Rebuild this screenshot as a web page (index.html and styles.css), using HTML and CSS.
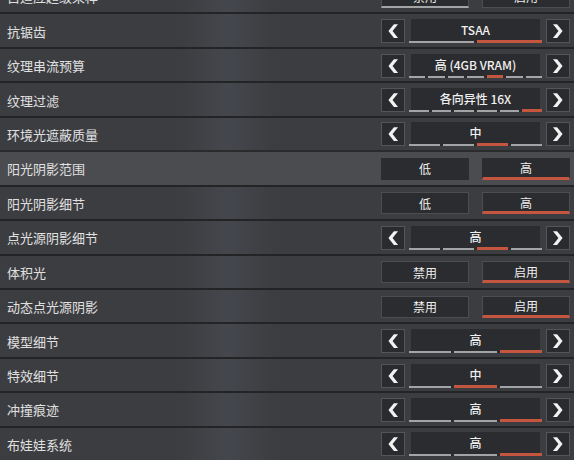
FILE: index.html
```html
<!DOCTYPE html>
<html lang="zh-CN">
<head>
    <meta charset="UTF-8">
    <title>视频设置</title>
    <link rel="stylesheet" href="styles.css">
</head>
<body>
    <div class="list">
        <div class="row">
            <span class="label">自适应超级采样</span>
            <div class="ctl toggle">
                <div class="opt gray">禁用</div>
                <div class="opt">启用</div>
            </div>
        </div>
        <div class="row">
            <span class="label">抗锯齿</span>
            <div class="ctl stepper">
                <div class="arrow"><svg width="24" height="22" viewBox="0 0 24 22"><polygon points="13,3.5 7,11 13,18.5 17.5,18.5 11.5,11 17.5,3.5" fill="#f2f2f2"/></svg></div>
                <div class="val"><div class="txt">TSAA</div><div class="bar"><i class="seg"></i><i class="seg on"></i></div></div>
                <div class="arrow"><svg width="24" height="22" viewBox="0 0 24 22"><polygon points="11,3.5 17,11 11,18.5 6.5,18.5 12.5,11 6.5,3.5" fill="#f2f2f2"/></svg></div>
            </div>
        </div>
        <div class="row">
            <span class="label">纹理串流预算</span>
            <div class="ctl stepper">
                <div class="arrow"><svg width="24" height="22" viewBox="0 0 24 22"><polygon points="13,3.5 7,11 13,18.5 17.5,18.5 11.5,11 17.5,3.5" fill="#f2f2f2"/></svg></div>
                <div class="val"><div class="txt">高 (4GB VRAM)</div><div class="bar"><i class="seg"></i><i class="seg"></i><i class="seg"></i><i class="seg"></i><i class="seg on"></i><i class="seg"></i><i class="seg"></i></div></div>
                <div class="arrow"><svg width="24" height="22" viewBox="0 0 24 22"><polygon points="11,3.5 17,11 11,18.5 6.5,18.5 12.5,11 6.5,3.5" fill="#f2f2f2"/></svg></div>
            </div>
        </div>
        <div class="row">
            <span class="label">纹理过滤</span>
            <div class="ctl stepper">
                <div class="arrow"><svg width="24" height="22" viewBox="0 0 24 22"><polygon points="13,3.5 7,11 13,18.5 17.5,18.5 11.5,11 17.5,3.5" fill="#f2f2f2"/></svg></div>
                <div class="val"><div class="txt">各向异性 16X</div><div class="bar"><i class="seg"></i><i class="seg"></i><i class="seg"></i><i class="seg"></i><i class="seg"></i><i class="seg on"></i></div></div>
                <div class="arrow"><svg width="24" height="22" viewBox="0 0 24 22"><polygon points="11,3.5 17,11 11,18.5 6.5,18.5 12.5,11 6.5,3.5" fill="#f2f2f2"/></svg></div>
            </div>
        </div>
        <div class="row">
            <span class="label">环境光遮蔽质量</span>
            <div class="ctl stepper">
                <div class="arrow"><svg width="24" height="22" viewBox="0 0 24 22"><polygon points="13,3.5 7,11 13,18.5 17.5,18.5 11.5,11 17.5,3.5" fill="#f2f2f2"/></svg></div>
                <div class="val"><div class="txt">中</div><div class="bar"><i class="seg"></i><i class="seg"></i><i class="seg on"></i><i class="seg"></i></div></div>
                <div class="arrow"><svg width="24" height="22" viewBox="0 0 24 22"><polygon points="11,3.5 17,11 11,18.5 6.5,18.5 12.5,11 6.5,3.5" fill="#f2f2f2"/></svg></div>
            </div>
        </div>
        <div class="row hot">
            <span class="label">阳光阴影范围</span>
            <div class="ctl toggle">
                <div class="opt">低</div>
                <div class="opt on">高</div>
            </div>
        </div>
        <div class="row">
            <span class="label">阳光阴影细节</span>
            <div class="ctl toggle">
                <div class="opt">低</div>
                <div class="opt on">高</div>
            </div>
        </div>
        <div class="row">
            <span class="label">点光源阴影细节</span>
            <div class="ctl stepper">
                <div class="arrow"><svg width="24" height="22" viewBox="0 0 24 22"><polygon points="13,3.5 7,11 13,18.5 17.5,18.5 11.5,11 17.5,3.5" fill="#f2f2f2"/></svg></div>
                <div class="val"><div class="txt">高</div><div class="bar"><i class="seg"></i><i class="seg"></i><i class="seg on"></i><i class="seg"></i></div></div>
                <div class="arrow"><svg width="24" height="22" viewBox="0 0 24 22"><polygon points="11,3.5 17,11 11,18.5 6.5,18.5 12.5,11 6.5,3.5" fill="#f2f2f2"/></svg></div>
            </div>
        </div>
        <div class="row">
            <span class="label">体积光</span>
            <div class="ctl toggle">
                <div class="opt">禁用</div>
                <div class="opt on">启用</div>
            </div>
        </div>
        <div class="row">
            <span class="label">动态点光源阴影</span>
            <div class="ctl toggle">
                <div class="opt">禁用</div>
                <div class="opt on">启用</div>
            </div>
        </div>
        <div class="row">
            <span class="label">模型细节</span>
            <div class="ctl stepper">
                <div class="arrow"><svg width="24" height="22" viewBox="0 0 24 22"><polygon points="13,3.5 7,11 13,18.5 17.5,18.5 11.5,11 17.5,3.5" fill="#f2f2f2"/></svg></div>
                <div class="val"><div class="txt">高</div><div class="bar"><i class="seg"></i><i class="seg"></i><i class="seg on"></i></div></div>
                <div class="arrow"><svg width="24" height="22" viewBox="0 0 24 22"><polygon points="11,3.5 17,11 11,18.5 6.5,18.5 12.5,11 6.5,3.5" fill="#f2f2f2"/></svg></div>
            </div>
        </div>
        <div class="row">
            <span class="label">特效细节</span>
            <div class="ctl stepper">
                <div class="arrow"><svg width="24" height="22" viewBox="0 0 24 22"><polygon points="13,3.5 7,11 13,18.5 17.5,18.5 11.5,11 17.5,3.5" fill="#f2f2f2"/></svg></div>
                <div class="val"><div class="txt">中</div><div class="bar"><i class="seg"></i><i class="seg on"></i><i class="seg"></i></div></div>
                <div class="arrow"><svg width="24" height="22" viewBox="0 0 24 22"><polygon points="11,3.5 17,11 11,18.5 6.5,18.5 12.5,11 6.5,3.5" fill="#f2f2f2"/></svg></div>
            </div>
        </div>
        <div class="row">
            <span class="label">冲撞痕迹</span>
            <div class="ctl stepper">
                <div class="arrow"><svg width="24" height="22" viewBox="0 0 24 22"><polygon points="13,3.5 7,11 13,18.5 17.5,18.5 11.5,11 17.5,3.5" fill="#f2f2f2"/></svg></div>
                <div class="val"><div class="txt">高</div><div class="bar"><i class="seg"></i><i class="seg"></i><i class="seg on"></i></div></div>
                <div class="arrow"><svg width="24" height="22" viewBox="0 0 24 22"><polygon points="11,3.5 17,11 11,18.5 6.5,18.5 12.5,11 6.5,3.5" fill="#f2f2f2"/></svg></div>
            </div>
        </div>
        <div class="row">
            <span class="label">布娃娃系统</span>
            <div class="ctl stepper">
                <div class="arrow"><svg width="24" height="22" viewBox="0 0 24 22"><polygon points="13,3.5 7,11 13,18.5 17.5,18.5 11.5,11 17.5,3.5" fill="#f2f2f2"/></svg></div>
                <div class="val"><div class="txt">高</div><div class="bar"><i class="seg"></i><i class="seg"></i><i class="seg on"></i></div></div>
                <div class="arrow"><svg width="24" height="22" viewBox="0 0 24 22"><polygon points="11,3.5 17,11 11,18.5 6.5,18.5 12.5,11 6.5,3.5" fill="#f2f2f2"/></svg></div>
            </div>
        </div>
    </div>
</body>
</html>
```

FILE: styles.css
```css
body { margin: 0; background: #3c3d40; font-family: "Noto Sans CJK SC", "Noto Sans", sans-serif; color: #e0e0e0; overflow: hidden; }
.list { margin-top: -22px; }
.row { height: 34.45px; box-sizing: border-box; border-top: 2px solid #232426; display: flex; align-items: center; justify-content: space-between; padding: 1px 4px 0 7px; background: linear-gradient(90deg, rgba(0,0,0,0) 180px, rgba(120,132,155,.14) 228px, rgba(0,0,0,0) 275px), #3c3d40; }
.row.hot { background: #4b4c4f; border-top-color: #2a2b2d; }
.label { font-size: 13px; }
.ctl { width: 189px; display: flex; }

.stepper { gap: 6px; height: 24px; }
.arrow { width: 24px; box-sizing: border-box; border: 1px solid #545559; background: #2a2b2e; display: flex; align-items: center; justify-content: center; }
.arrow svg { display: block; }
.val { flex: 1; display: flex; flex-direction: column; background: #2b2c2f; }
.txt { flex: 1; display: flex; align-items: center; justify-content: center; font-size: 12px; font-weight: 500; color: #f0f0f0; }
.bar { display: flex; gap: 3px; height: 3px; align-items: flex-end; margin: 0 -2px; }
.seg { flex: 1; height: 2px; background: #a3a4a6; }
.seg.on { height: 3px; background: #c4553e; }

.toggle { gap: 13px; height: 22px; }
.opt { flex: 1; box-sizing: border-box; border: 1px solid #4c4d50; background: #2b2c2f; font-size: 12px; color: #f0f0f0; display: flex; align-items: center; justify-content: center; }
.hot .opt { border-color: #2b2c2f; }
.opt.on { border-bottom: 3px solid #c4553e; }
.opt.gray { border-bottom: 2px solid #a3a4a6; }
```
